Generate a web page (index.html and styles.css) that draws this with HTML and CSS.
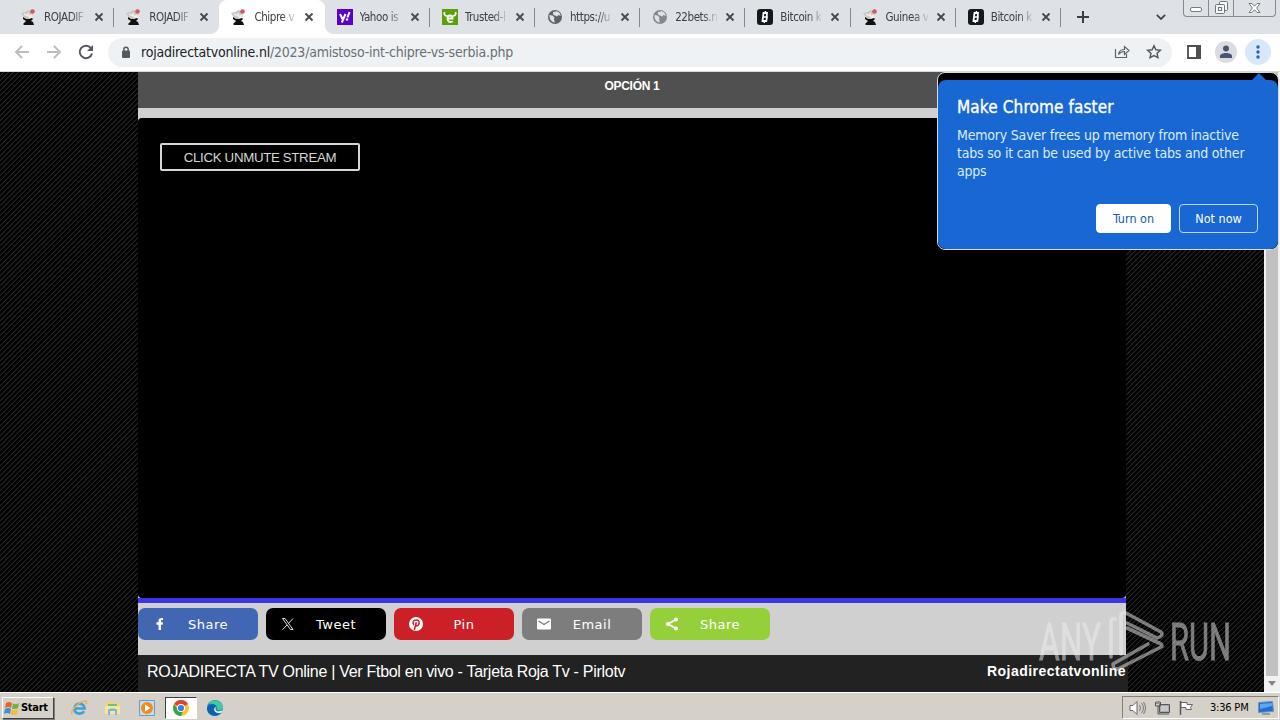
FILE: index.html
```html
<!DOCTYPE html>
<html lang="es">
<head>
  <meta charset="UTF-8" />
  <title>Chipre vs Serbia</title>
  <link rel="stylesheet" href="styles.css">
</head>
<body>

  <svg class="defs" width="0" height="0">
    <symbol id="player" viewBox="0 0 16 16">
      <path d="M0 4l4-1 4-2 3 2 1 4-2 3-5 1-3-4z" fill="#cbc6bf"/>
      <path d="M3 5l4 2M7 4l1 4" stroke="#eee" stroke-width="1.500" fill="none"/>
      <path d="M8 7l3-2 1 4-4 1z" fill="#eee"/>
      <circle cx="11.500" cy="2.500" r="2.300" fill="#cf5960"/>
      <path d="M2 8l3 2h3l3-1 1 1-2 2 2 1 1 3H3l-1-1 3-3-3-2z" fill="#111"/>
    </symbol>
    <symbol id="globe" viewBox="0 0 16 16">
      <circle cx="8" cy="8" r="7" fill="currentColor"/>
      <path d="M2.500 6l3 .5 2 2-.5 2 1 3c-3 0-6-3-5.500-7.500zM6 3l4-.8c2 .7 3.500 2.300 3.700 4.800l-2.200-1-1.500 1.500L8 6.500l-2-1z" fill="#dee1e6"/>
    </symbol>
    <symbol id="bit" viewBox="0 0 16 16">
      <rect width="16" height="16" rx="3" fill="#15191d"/>
      <path d="M6.500 4h3.500l-.3 3.500.3.500-.7 4H5.500z" fill="none" stroke="#fff" stroke-width="1.800"/>
      <path d="M8.500 2l-.3 2M7.500 12l-.2 2M6.500 8h3" stroke="#fff" stroke-width="1.400"/>
    </symbol>
    <symbol id="close" viewBox="0 0 10 10">
      <path d="M1.500 1.500l7 7M8.500 1.500l-7 7" stroke="#45494e" stroke-width="1.800"/>
    </symbol>
  </svg>

  <div class="tabs">
    <div class="tab"><svg class="fav"><use href="#player"/></svg><span class="title">ROJADIF</span><svg class="x"><use href="#close"/></svg></div>
    <div class="tab no-line"><svg class="fav"><use href="#player"/></svg><span class="title">ROJADIF</span><svg class="x"><use href="#close"/></svg></div>
    <div class="tab active"><svg class="fav"><use href="#player"/></svg><span class="title">Chipre v</span><svg class="x"><use href="#close"/></svg></div>
    <div class="tab">
      <svg class="fav" viewBox="0 0 16 16"><rect width="16" height="16" fill="#5a00c8"/><path d="M3 5l2.800 5.500M8.500 5l-3.700 8.500" stroke="#fff" stroke-width="2"/><path d="M12.500 3l-2 5.500" stroke="#fff" stroke-width="2"/><circle cx="10" cy="10.500" r="1.200" fill="#fff"/></svg>
      <span class="title">Yahoo is</span><svg class="x"><use href="#close"/></svg>
    </div>
    <div class="tab">
      <svg class="fav" viewBox="0 0 16 16"><rect width="16" height="16" fill="#5c9e0b"/><path d="M2.500 3c-1 3 1 4 3 4M13.500 3c1 3-1 4-3 4" fill="none" stroke="#fff" stroke-width="1.800"/><path d="M5.500 9.500h5c0-4-5-4-5 0 0 4 4 4 5 2.500" fill="none" stroke="#fff" stroke-width="1.800"/></svg>
      <span class="title">Trusted-l</span><svg class="x"><use href="#close"/></svg>
    </div>
    <div class="tab"><svg class="fav dark"><use href="#globe"/></svg><span class="title">https://u</span><svg class="x"><use href="#close"/></svg></div>
    <div class="tab"><svg class="fav grey"><use href="#globe"/></svg><span class="title">22bets.n</span><svg class="x"><use href="#close"/></svg></div>
    <div class="tab"><svg class="fav"><use href="#bit"/></svg><span class="title">Bitcoin k</span><svg class="x"><use href="#close"/></svg></div>
    <div class="tab"><svg class="fav"><use href="#player"/></svg><span class="title">Guinea v</span><svg class="x"><use href="#close"/></svg></div>
    <div class="tab"><svg class="fav"><use href="#bit"/></svg><span class="title">Bitcoin k</span><svg class="x"><use href="#close"/></svg></div>
    <svg class="plus" viewBox="0 0 12 12"><path d="M6 0v12M0 6h12" stroke="#3c4043" stroke-width="2"/></svg>
    <svg class="chevron" viewBox="0 0 10 6"><path d="M.8.8L5 5 9.200.8" fill="none" stroke="#45494e" stroke-width="1.800"/></svg>
    <div class="win-buttons">
      <span><svg width="12" height="16"><rect x=".5" y="7.500" width="11" height="4" rx="1.500" fill="#fff" stroke="#777b82"/></svg></span>
      <span><svg width="13" height="16"><g fill="#f5f6f8" stroke="#6f737a"><rect x="4.500" y="1.500" width="8" height="9" rx="1"/><rect x=".5" y="4.500" width="9" height="9" rx="1"/><rect x="3.500" y="7.500" width="3" height="3"/></g></svg></span>
      <span class="wide"><svg width="13" height="16"><path d="M1 3.500h3l2.500 2.700L9 3.500h3L8.600 8l3.400 4.500H9L6.500 9.700 4 12.500H1L4.400 8z" fill="#fff" stroke="#777b82"/></svg></span>
    </div>
  </div>

  <div class="toolbar">
    <svg class="nav" viewBox="0 0 16 16"><path d="M15 8H2M8 2L2 8l6 6" fill="none" stroke="#babcbe" stroke-width="1.800"/></svg>
    <svg class="nav" viewBox="0 0 16 16"><path d="M1 8h13M8 2l6 6-6 6" fill="none" stroke="#babcbe" stroke-width="1.800"/></svg>
    <svg class="nav" viewBox="0 0 16 16"><path d="M13 4.300A6.200 6.200 0 1 0 14 9.500" fill="none" stroke="#55595d" stroke-width="2"/><path d="M15 1v6H9z" fill="#55595d"/></svg>
    <div class="omnibox">
      <svg class="lock" viewBox="0 0 10 12"><rect x="1" y="4" width="8" height="7.500" rx="1" fill="#55595e"/><path d="M2.800 5V3a2.200 2.200 0 0 1 4.400 0v2" fill="none" stroke="#55595e" stroke-width="1.400"/></svg>
      <div class="url"><b>rojadirectatvonline.nl</b>/2023/amistoso-int-chipre-vs-serbia.php</div>
      <svg class="share" viewBox="0 0 16 16"><path d="M1.500 5v8.500h11V10M4.500 10.500c.5-3.500 2.500-5 6-5v-3l4.500 4-4.500 4v-3c-3 0-4.500 1-6 3z" fill="none" stroke="#5f6368" stroke-width="1.200"/></svg>
      <svg class="star" viewBox="0 0 16 16"><path d="M8 1.800l1.900 4 4.400.5-3.200 3 .8 4.300L8 11.500l-3.900 2.100.8-4.300-3.200-3 4.400-.5z" fill="none" stroke="#55595e" stroke-width="1.500"/></svg>
    </div>
    <svg class="panel" viewBox="0 0 14 14"><path d="M1 1h12v12H1z" fill="none" stroke="#4d4f53" stroke-width="1.800"/><path d="M9 0h5v14H9z" fill="#4d4f53"/></svg>
    <svg class="avatar" viewBox="0 0 22 22"><circle cx="11" cy="11" r="11" fill="#dadce0"/><circle cx="11" cy="7.500" r="3" fill="#4b5470"/><path d="M5 17v-2c0-4 12-4 12 0v2z" fill="#4b5470"/></svg>
    <svg class="menu" viewBox="0 0 26 26"><circle cx="13" cy="13" r="13" fill="#d9e7fb"/><g fill="#2463bd"><circle cx="13" cy="8" r="1.700"/><circle cx="13" cy="13" r="1.700"/><circle cx="13" cy="18" r="1.700"/></g></svg>
  </div>

  <div class="viewport">
    <main>
      <div class="option">OPCIÓN 1</div>
      <div class="player-wrap">
        <div class="player"><button class="unmute">CLICK UNMUTE STREAM</button></div>
      </div>
      <div class="share-row">
        <a class="btn facebook"><svg viewBox="0 0 16 16"><path d="M6.500 14V8.700H4.500V6.300h2V5c0-2.300 1.200-3.300 4.500-2.900v2C9.400 4 9 4.300 9 5v1.300h2l-.4 2.400H9V14z" fill="#fff"/></svg><span>Share</span></a>
        <a class="btn twitter"><svg viewBox="0 0 16 16"><path d="M2.500 2.500h2.500l8 11h-2.500zM13 2.500L8.700 7.300M7 9l-4.500 4.700" fill="none" stroke="#ddd"/></svg><span>Tweet</span></a>
        <a class="btn pinterest"><svg viewBox="0 0 16 16"><circle cx="8" cy="8" r="7" fill="#fff"/><path d="M5.800 9C3.500 6 6 4 8.200 4c2.400 0 3.500 1.700 2.800 3.800-.6 2.200-2.500 2.600-3.200 1.400M8.300 6.200L6.300 14" fill="none" stroke="#cb2027" stroke-width="1.500"/></svg><span>Pin</span></a>
        <a class="btn email"><svg viewBox="0 0 16 16"><rect x="1" y="2.500" width="14" height="11" rx="1" fill="#fff"/><path d="M2.500 5L8 8.500 13.500 5" fill="none" stroke="#7d7d7d" stroke-width="1.400"/></svg><span>Email</span></a>
        <a class="btn sharethis"><svg viewBox="0 0 16 16"><path d="M12 3.500L4 8l8 4.500" fill="none" stroke="#fff" stroke-width="1.500"/><g fill="#fff"><circle cx="12" cy="3.500" r="2"/><circle cx="4" cy="8" r="2.100"/><circle cx="12" cy="12.500" r="2"/></g></svg><span>Share</span></a>
      </div>
      <footer>
        <span>ROJADIRECTA TV Online | Ver Ftbol en vivo - Tarjeta Roja Tv - Pirlotv</span>
        <strong>Rojadirectatvonline</strong>
      </footer>
    </main>
    <div class="scrollbar"><div class="thumb"></div><i></i></div>

    <div class="bubble">
      <div class="bubble-body">
        <h2>Make Chrome faster</h2>
        <p>Memory Saver frees up memory from inactive<br>tabs so it can be used by active tabs and other<br>apps</p>
        <div class="actions">
          <button class="on">Turn on</button>
          <button>Not now</button>
        </div>
      </div>
    </div>

    <svg class="watermark" viewBox="0 0 200 64">
      <text x="4" y="51" textLength="62" lengthAdjust="spacingAndGlyphs">ANY</text>
      <text x="135" y="51" textLength="61" lengthAdjust="spacingAndGlyphs">RUN</text>
      <path d="M76 48V12q0-3 4-2M86 45V6q1-4 5-2l35 19q3 4-4 6L92 14M92 19l34 16q2 2 0 3L83 60q-5 1-5-5l35-20" fill="none" stroke-width="3.600" stroke-linejoin="round" stroke-linecap="round"/>
    </svg>
  </div>

  <div class="taskbar">
    <div class="start">
      <svg width="16" height="16" viewBox="0 0 16 16"><path d="M2 3c2-1.500 4-1.500 6 0L7 8C5 6.700 3 6.700 1 8z" fill="#e8622c"/><path d="M9 3.500c2 1 4 1 6-.5l-1 5c-2 1.300-4 1.300-6 .5z" fill="#72b043"/><path d="M1 9c2-1.300 4-1.300 6 0l-1 5c-2-1.300-4-1.300-6 0z" fill="#3f8fd2"/><path d="M8 9.500c2 1 4 1 6-.5l-1 5c-2 1.300-4 1.300-6 .5z" fill="#f5bd2c"/></svg>
      Start
    </div>
    <div class="task ie"><svg width="18" height="18" viewBox="0 0 18 18"><path d="M4.500 9.500h10C14 3 5 3 4.500 9.500c0 6 7 6.500 9.500 2.700" fill="none" stroke="#3ba0dd" stroke-width="2.700"/><path d="M2 15C0 12 8 3 15 2c2 0 2 1 1 3" fill="none" stroke="#e5b548" stroke-width="1.300"/></svg></div>
    <div class="task"><svg width="18" height="18" viewBox="0 0 18 18"><path d="M2 4l5-2 1 2h7v9H2z" fill="#f0d573"/><path d="M4 5h9v4H4z" fill="#75bd7e"/><path d="M1 7h15v8H1z" fill="#f8e59a"/><path d="M4 16v-5c0-2 9-2 9 0v5h-2v-4H6v4z" fill="#78b9df"/></svg></div>
    <div class="task"><svg width="18" height="18" viewBox="0 0 18 18"><path d="M1.500 1.500h15v15h-15z" fill="#c6ddf0" stroke="#6d9ac5"/><circle cx="9" cy="9" r="6" fill="#ef8b22"/><path d="M7 5.500v7L12.500 9z" fill="#fff"/></svg></div>
    <div class="task pressed"><svg width="18" height="18" viewBox="0 0 18 18"><circle cx="9" cy="9" r="8" fill="#f7c62f"/><path d="M9 9L2.100 5A8 8 0 0 1 16 5z" fill="#df4335"/><path d="M9 17A8 8 0 0 1 2.100 5L6 11l5 1z" fill="#36a352"/><circle cx="9" cy="9" r="4" fill="#fff"/><circle cx="9" cy="9" r="3.100" fill="#397ee8"/></svg></div>
    <div class="task"><svg width="18" height="18" viewBox="0 0 18 18"><circle cx="9" cy="9" r="8" fill="#1687cf"/><path d="M2 5c4-6 14-4 15 3 0 4-5 4-6 2 1-5-5-6-9-5z" fill="#49c99b"/><path d="M1 9c1-4 7-5 9-2-5 3-1 8 5 7-5 5-14 3-14-5z" fill="#0b62b0"/><path d="M10 8c-2 4 2 6 7 3l-2 3c-6 1-9-4-5-6z" fill="#eef6f5"/></svg></div>
    <div class="tray">
      <svg width="18" height="16" viewBox="0 0 18 16"><path d="M1 5.500h3l4-4v13l-4-4H1z" fill="#fff" stroke="#666"/><path d="M10.500 5q2 3 0 6M12.500 3q4 5 0 10M14.500 2q4 6 0 12" fill="none" stroke="#777"/></svg>
      <svg width="17" height="16" viewBox="0 0 17 16"><path d="M5.500 4.500h10v8h-10z" fill="#aaa" stroke="#555"/><path d="M7 6h7v5H7z" fill="#c8c8c8"/><path d="M1.500 2v4h5V2M3 1v3M5 1v3M4 6v8h11" fill="none" stroke="#555"/></svg>
      <svg width="16" height="16" viewBox="0 0 16 16"><path d="M2.500 1v14" stroke="#555" stroke-width="1.500"/><path d="M3 2.500h6v2h5.500l-2 3 1 2H8v-2H3z" fill="#fff" stroke="#666"/></svg>
      <span class="clock">3:36 PM</span>
      <svg width="16" height="14" viewBox="0 0 16 14"><path d="M.5 1.500l14-1 1 10-15 1z" fill="#246bd2" stroke="#7095bd"/><path d="M2 3l12-1v3L2 8z" fill="#60a6ed"/><path d="M4 13h8" stroke="#8799ad" stroke-width="2"/></svg>
    </div>
  </div>

</body>
</html>
```
FILE: styles.css
```css
* { box-sizing: border-box; }

html, body {
  margin: 0;
  height: 720px;
  overflow: hidden;
}

body {
  display: flex;
  flex-direction: column;
  font-family: 'DejaVu Sans Condensed', 'DejaVu Sans', sans-serif;
  font-stretch: condensed;
}

svg { flex-shrink: 0; }
.defs { position: absolute; }

.tabs {
  display: flex;
  height: 34px;
  padding-left: 9px;
  background: #dee1e6;
}

.tab {
  display: flex;
  align-items: center;
  width: 105.2px;
  flex-shrink: 0;
  padding-left: 12px;
  background: linear-gradient(#85898f, #85898f) no-repeat right 8px / 1px 19px;
}

.tab.no-line { background: none; }

.tab.active {
  position: relative;
  background: #fff;
  border-radius: 8px 8px 0 0;
}

.tab.active::before, .tab.active::after {
  content: "";
  position: absolute;
  bottom: 0;
  width: 8px;
  height: 8px;
}

.tab.active::before {
  left: -8px;
  background: radial-gradient(circle at 0 0, transparent 7.5px, #fff 8px);
}

.tab.active::after {
  right: -8px;
  background: radial-gradient(circle at 100% 0, transparent 7.5px, #fff 8px);
}

.fav { width: 16px; height: 16px; }
.dark { color: #5f6368; }
.grey { color: #85888c; }

.title {
  width: 46px;
  margin-left: 7px;
  white-space: nowrap;
  font-size: 11.5px;
  letter-spacing: -0.4px;
  color: #3c4043;
  -webkit-mask-image: linear-gradient(90deg, #000 60%, transparent 95%);
  mask-image: linear-gradient(90deg, #000 60%, transparent 95%);
}

.x { width: 10px; height: 10px; margin-left: 4px; }
.plus { width: 12px; height: 12px; margin: 11px 0 0 16px; }
.chevron { width: 10px; height: 6px; margin: 14px 0 0 67px; }

.win-buttons {
  display: flex;
  width: 93px;
  height: 17px;
  margin: 0 4px 0 auto;
  border: 1px solid #868a91;
  border-top: 0;
  border-radius: 0 0 4px 4px;
}

.win-buttons span {
  display: flex;
  justify-content: center;
  width: 25px;
  border-right: 1px solid #868a91;
}

.win-buttons .wide { flex: 1; border: 0; }

.toolbar {
  display: flex;
  align-items: center;
  height: 38px;
  padding: 0 9px 1px 14px;
  background: #fff;
  border-bottom: 1px solid #d5d8d6;
}

.nav { width: 16px; height: 16px; margin-right: 16px; }

.omnibox {
  display: flex;
  align-items: center;
  width: 1064px;
  height: 29px;
  margin-left: -2px;
  padding: 0 10px 0 13px;
  border-radius: 15px;
  background: #eff2f5;
}

.lock { width: 10px; height: 13px; }

.url {
  flex: 1;
  margin-left: 10px;
  font-size: 14px;
  letter-spacing: -0.22px;
  color: #6a6e73;
}

.url b { font-weight: normal; color: #202124; }
.share { width: 16px; height: 16px; }
.star { width: 16px; height: 16px; margin-left: 16px; }
.panel { width: 14px; height: 14px; margin-left: 15px; }
.avatar { width: 22px; height: 22px; margin-left: 14px; }
.menu { width: 26px; height: 26px; margin-left: 8px; }

.viewport {
  position: relative;
  display: flex;
  height: 620px;
  padding-left: 138px;
  background: repeating-linear-gradient(135deg, #000 0 1.9px, #282828 2.4px 3px, #000 3.536px);
}

main { width: 990px; }

.option {
  width: 988px;
  height: 36px;
  padding-top: 6px;
  background: #505050;
  color: #fff;
  font: bold 12px/16px 'Liberation Sans', sans-serif;
  letter-spacing: -0.3px;
  text-align: center;
}

.player-wrap {
  width: 988px;
  padding-top: 10px;
  background: #d0d0d0;
  border-bottom: 5px solid #3b37e3;
}

.player {
  height: 480px;
  padding: 25px 22px;
  border-radius: 4px;
  background: #000;
}

.unmute {
  display: block;
  width: 200px;
  height: 28px;
  padding: 0;
  border: 2px solid #d6d6d6;
  border-radius: 2px;
  background: #000;
  color: #d6d6d6;
  font: 13.3px 'Liberation Sans', sans-serif;
  letter-spacing: -0.34px;
}

.share-row {
  display: flex;
  gap: 8px;
  width: 988px;
  height: 52px;
  padding-top: 5px;
  background: #d0d0d0;
}

.btn {
  display: flex;
  align-items: center;
  width: 120px;
  height: 32px;
  padding-left: 14px;
  border-radius: 7px;
  color: #fff;
  font: 13px 'DejaVu Sans', sans-serif;
  letter-spacing: 0.5px;
}

.btn svg { width: 16px; height: 16px; }
.btn span { flex: 1; padding-right: 10px; text-align: center; }
.facebook { background: #4267b2; }
.twitter { background: #000; }
.pinterest { background: #cb2027; }
.email { background: #7d7d7d; }
.sharethis { background: #95d03a; }

footer {
  display: flex;
  justify-content: space-between;
  height: 37px;
  padding: 6px 2px 0 9px;
  background: #222;
  color: #fff;
  font: 16px/21px 'Liberation Sans', sans-serif;
  white-space: nowrap;
}

footer span { letter-spacing: -0.29px; }
footer strong { font-size: 14px; letter-spacing: 0.48px; }

.scrollbar {
  display: flex;
  flex-direction: column;
  align-items: center;
  width: 16px;
  margin-left: auto;
  background: #f1f1f1;
}

.thumb { width: 12px; height: 604px; background: #c1c1c1; }

.scrollbar i {
  margin-top: 5px;
  border: 4px solid transparent;
  border-top: 5px solid #858585;
}

.bubble {
  position: absolute;
  top: 0;
  right: 1px;
  width: 342px;
  height: 178px;
  padding-top: 7px;
  border: 1px solid #d5dce5;
  border-radius: 8px;
  background: #000;
}

.bubble::before {
  content: "";
  position: absolute;
  top: 0;
  right: 11px;
  border: 8px solid transparent;
  border-top: 0;
  border-bottom-color: #1967d2;
}

.bubble-body {
  height: 169px;
  padding: 17px 20px 0 19px;
  border-radius: 8px;
  background: #1967d2;
  color: #fff;
}

.bubble h2 {
  margin: 0;
  font-size: 17px;
  line-height: 20px;
  font-weight: normal;
  letter-spacing: 0.13px;
  -webkit-text-stroke: 0.35px #fff;
}

.bubble p {
  margin: 9px 0 24px;
  font-size: 14px;
  line-height: 18px;
  letter-spacing: -0.2px;
  white-space: nowrap;
  color: #d8ecff;
}

.actions { display: flex; justify-content: flex-end; gap: 8px; }

.actions button {
  width: 79px;
  height: 29px;
  padding: 0;
  border: 1px solid #b9d8fb;
  border-radius: 4px;
  background: none;
  color: #fff;
  font: 12.5px 'DejaVu Sans Condensed', sans-serif;
}

.actions .on { width: 75px; border-color: #fff; background: #fff; color: #1a56a8; }

.watermark {
  position: absolute;
  left: 1035px;
  top: 537px;
  width: 200px;
  height: 64px;
  opacity: 0.5;
  fill: #eee;
  stroke: #eee;
}

.watermark text {
  stroke-width: 0.8px;
  font: 51px Roboto, sans-serif;
}

.taskbar {
  display: flex;
  align-items: center;
  height: 28px;
  padding: 2px 1px 0 2px;
  border-top: 1px solid #fff;
  background: #d5d0c8;
}

.start {
  display: flex;
  align-items: center;
  gap: 1px;
  width: 52px;
  height: 22px;
  margin-right: 9px;
  padding-left: 1px;
  border: 1px solid;
  border-color: #fff #404040 #404040 #fff;
  box-shadow: 1px 1px 0 #808080;
  font-size: 11px;
  font-weight: bold;
  letter-spacing: -0.3px;
}

.task {
  display: flex;
  align-items: center;
  justify-content: center;
  width: 32px;
  height: 22px;
  margin-right: 2px;
}

.task.pressed {
  background: #fff;
  border: 1px solid;
  border-color: #404040 #fff #fff #404040;
}

.tray {
  display: flex;
  align-items: center;
  width: 157px;
  height: 23px;
  margin-left: auto;
  padding-left: 6px;
  gap: 7px;
  border: 1px solid;
  border-color: #808080 #fff #fff #808080;
}

.clock { margin: 0 3px 0 9px; font-size: 11px; letter-spacing: -0.2px; white-space: nowrap; }
```
